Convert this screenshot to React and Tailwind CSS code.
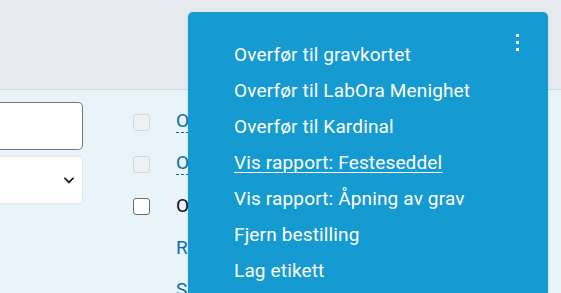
import React from "react";

const menuItems = [
  { label: "Overfør til gravkortet" },
  { label: "Overfør til LabOra Menighet" },
  { label: "Overfør til Kardinal" },
  { label: "Vis rapport: Festeseddel", active: true },
  { label: "Vis rapport: Åpning av grav" },
  { label: "Fjern bestilling" },
  { label: "Lag etikett" },
];

function Checkbox({ disabled }) {
  return (
    <div
      className={
        disabled
          ? "w-[17px] h-[17px] rounded-[3px] border border-[#d4d8dc] bg-[#eef1f4]"
          : "w-[17px] h-[17px] rounded-[3px] border border-[#6b6e72] bg-white"
      }
    />
  );
}

export default function App() {
  return (
    <div
      className="relative w-[561px] h-[293px] overflow-hidden bg-[#e8f4fa]"
      style={{ fontFamily: "Roboto, 'Noto Sans', sans-serif" }}
    >
      {/* top bar */}
      <div className="h-[90px] bg-[#e6e9ee] border-b border-[#d5d9de]" />

      <div className="flex">
        {/* form fields */}
        <div className="w-[83px] pt-[12px] flex flex-col gap-[6px]">
          <div className="h-[48px] bg-white border border-[#74787d] rounded-r-[5px] border-l-0" />
          <div className="h-[48px] bg-white border border-[#e3e6e9] rounded-r-[5px] border-l-0 flex items-center justify-end pr-[6px]">
            <svg width="14" height="14" viewBox="0 0 24 24" fill="none" stroke="#111" strokeWidth="3" strokeLinecap="round" strokeLinejoin="round">
              <path d="M5 9l7 7 7-7" />
            </svg>
          </div>
        </div>

        {/* list rows */}
        <div className="ml-[50px] pt-[21px] flex flex-col text-[19px] leading-[20px]">
          <div className="flex items-center h-[42px] -mt-[10px]">
            <Checkbox disabled />
            <span className="ml-[26px] text-[#0b6ea8] border-b border-dashed border-[#0b6ea8] pb-[1px]">Overfør</span>
          </div>
          <div className="flex items-center h-[42px]">
            <Checkbox disabled />
            <span className="ml-[26px] text-[#0b6ea8] border-b border-dashed border-[#0b6ea8] pb-[1px]">Overfør</span>
          </div>
          <div className="flex items-center h-[42px]">
            <Checkbox />
            <span className="ml-[26px] text-[#111]">Overfør</span>
          </div>
          <div className="flex items-center h-[42px]">
            <span className="ml-[43px] text-[#0b6ea8]">Rapport</span>
          </div>
          <div className="flex items-center h-[42px]">
            <span className="ml-[43px] text-[#0b6ea8]">Slett</span>
          </div>
        </div>
      </div>

      {/* dropdown menu overlay */}
      <div className="absolute left-[188px] top-[12px] w-[360px] h-[300px] bg-[#159ad2] rounded-t-[5px] shadow-sm">
        <div className="absolute right-[29px] top-[22px] flex flex-col gap-[4px]">
          <span className="block w-[3px] h-[3px] bg-white" />
          <span className="block w-[3px] h-[3px] bg-white" />
          <span className="block w-[3px] h-[3px] bg-white" />
        </div>
        <ul className="pt-[25px] pl-[46px] flex flex-col text-white text-[19px] leading-[36px] tracking-[0.15px]">
          {menuItems.map((item) => (
            <li key={item.label}>
              <span className={item.active ? "underline underline-offset-[3px] decoration-1" : ""}>
                {item.label}
              </span>
            </li>
          ))}
        </ul>
      </div>
    </div>
  );
}
